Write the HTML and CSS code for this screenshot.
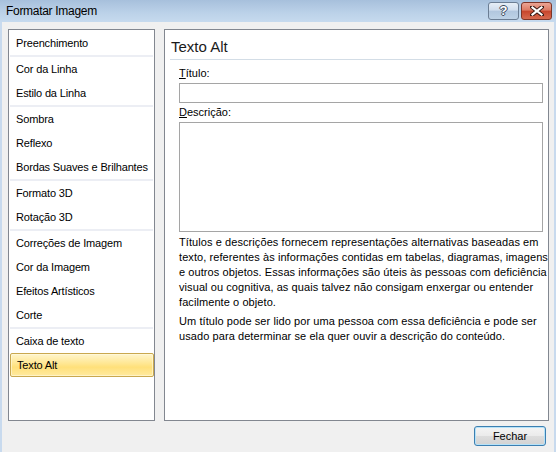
FILE: index.html
```html
<!DOCTYPE html>
<html lang="pt">
<head>
<meta charset="utf-8">
<title>Formatar Imagem</title>
<link rel="stylesheet" href="styles.css">
</head>
<body>
<div class="window">
  <div class="titlebar">
    <span class="title">Formatar Imagem</span>
    <div class="caption-buttons">
      <div class="cbtn help"><span class="qmark">?</span></div>
      <div class="cbtn close">
        <svg width="14" height="10" viewBox="0 0 14 10">
          <path d="M2 1 L12 9 M12 1 L2 9" stroke="#3a1a14" stroke-width="4" stroke-linecap="square" fill="none"/>
          <path d="M2.5 1.5 L11.5 8.5 M11.5 1.5 L2.5 8.5" stroke="#ffffff" stroke-width="2.2" stroke-linecap="square" fill="none"/>
        </svg>
      </div>
    </div>
  </div>
  <div class="client">
    <div class="main">
      <div class="nav">
        <div class="item">Preenchimento</div>
        <div class="sep"></div>
        <div class="item">Cor da Linha</div>
        <div class="item">Estilo da Linha</div>
        <div class="sep"></div>
        <div class="item">Sombra</div>
        <div class="item">Reflexo</div>
        <div class="item">Bordas Suaves e Brilhantes</div>
        <div class="sep"></div>
        <div class="item">Formato 3D</div>
        <div class="item">Rotação 3D</div>
        <div class="sep"></div>
        <div class="item">Correções de Imagem</div>
        <div class="item">Cor da Imagem</div>
        <div class="item">Efeitos Artísticos</div>
        <div class="item">Corte</div>
        <div class="sep"></div>
        <div class="item">Caixa de texto</div>
        <div class="item selected">Texto Alt</div>
      </div>
      <div class="content">
        <div class="heading">Texto Alt</div>
        <div class="heading-line"></div>
        <div class="form">
          <div class="label first"><u>T</u>ítulo:</div>
          <div class="input"></div>
          <div class="label"><u>D</u>escrição:</div>
          <div class="textarea"></div>
          <p class="para">Títulos e descrições fornecem representações alternativas baseadas em<br>texto, referentes às informações contidas em tabelas, diagramas, imagens<br>e outros objetos. Essas informações são úteis às pessoas com deficiência<br>visual ou cognitiva, as quais talvez não consigam enxergar ou entender<br>facilmente o objeto.</p>
          <p class="para second">Um título pode ser lido por uma pessoa com essa deficiência e pode ser<br>usado para determinar se ela quer ouvir a descrição do conteúdo.</p>
        </div>
      </div>
    </div>
    <div class="footer">
      <div class="button">Fechar</div>
    </div>
  </div>
</div>
</body>
</html>
```

FILE: styles.css
```css
html, body {
  margin: 0;
  padding: 0;
  width: 556px;
  height: 452px;
  overflow: hidden;
  background: #f0f0f0;
  font-family: "Liberation Sans", Arial, sans-serif;
  font-size: 11px;
  color: #000;
}

.window {
  width: 556px;
  height: 452px;
  display: flex;
  flex-direction: column;
  box-sizing: border-box;
}

.titlebar {
  height: 22px;
  flex: none;
  display: flex;
  align-items: flex-start;
  justify-content: space-between;
  background: linear-gradient(#a7c0dc, #bcd2e9 60%, #c6daee);
  box-sizing: border-box;
}

.title {
  font-size: 12px;
  line-height: 22px;
  padding-left: 6px;
  color: #000;
  letter-spacing: -0.3px;
}

.caption-buttons {
  display: flex;
  gap: 2px;
  padding-top: 2px;
  padding-right: 4px;
}

.cbtn {
  width: 29px;
  height: 16px;
  border: 1px solid #6b7d93;
  border-radius: 3px;
  display: flex;
  align-items: center;
  justify-content: center;
}

.help {
  background: linear-gradient(#e6eef7, #d0dded 45%, #b1c6de 50%, #bed2e6);
}

.qmark {
  font-family: "Liberation Sans", Arial, sans-serif;
  font-weight: bold;
  font-size: 13px;
  line-height: 14px;
  color: #fff;
  text-shadow: 1px 0 0 #3c4b5e, -1px 0 0 #3c4b5e, 0 1px 0 #3c4b5e, 0 -1px 0 #3c4b5e;
}

.close {
  border-color: #7d3528;
  background: linear-gradient(#eba595, #dc7a63 45%, #c7452c 50%, #d66a50);
}

.client {
  flex: 1;
  display: flex;
  flex-direction: column;
  background: #f0f0f0;
  border-left: 2px solid #c8daee;
  border-right: 2px solid #c8daee;
  padding: 7px 5px 0 6px;
}

.main {
  display: flex;
  gap: 9px;
  height: 392px;
}

.nav {
  flex: none;
  width: 147px;
  box-sizing: border-box;
  border: 1px solid #828790;
  background: #fff;
  padding-top: 1px;
  display: flex;
  flex-direction: column;
}

.item {
  height: 24px;
  line-height: 24px;
  padding-left: 7px;
  white-space: nowrap;
  letter-spacing: -0.15px;
}

.sep {
  height: 2px;
  margin: 0 1px 0 1px;
  background: #eceef4;
}

.item.selected {
  margin-left: 1px;
  height: 22px;
  line-height: 22px;
  padding-left: 6px;
  border: 1px solid #c9a84f;
  border-radius: 2px;
  background: linear-gradient(#fff5cc, #ffe690 45%, #ffe07a 60%, #ffeaa0);
  box-shadow: inset 0 0 0 1px rgba(255, 250, 225, 0.6);
}

.content {
  flex: none;
  width: 385px;
  box-sizing: border-box;
  border: 1px solid #828790;
  background: #fff;
  padding-top: 7px;
  overflow: hidden;
}

.heading {
  font-size: 15px;
  line-height: 20px;
  padding-left: 6px;
  color: #1a1a1a;
}

.heading-line {
  height: 1px;
  margin: 2px 5px 0 5px;
  background: #d3dde6;
}

.form {
  padding: 0 5px 0 14px;
}

.label {
  line-height: 15px;
  margin-top: 2px;
}

.label.first {
  margin-top: 6px;
}

.input {
  height: 18px;
  margin-top: 2px;
  border: 1px solid #a5a5a5;
  background: #fff;
}

.textarea {
  height: 108px;
  margin-top: 2px;
  border: 1px solid #a5a5a5;
  background: #fff;
}

.para {
  margin: 3px 0 0 0;
  line-height: 15px;
  white-space: nowrap;
  letter-spacing: 0.08px;
}

.para.second {
  margin-top: 4px;
}

.footer {
  display: flex;
  justify-content: flex-end;
  padding-top: 5px;
  padding-right: 3px;
}

.button {
  width: 70px;
  height: 18px;
  line-height: 18px;
  text-align: center;
  border: 1px solid #3c7fb1;
  border-radius: 3px;
  background: linear-gradient(#f4f4f4, #ebebeb 48%, #dddddd 52%, #d2d2d2);
  box-shadow: inset 0 0 0 1px #b6e2f8;
}
```
